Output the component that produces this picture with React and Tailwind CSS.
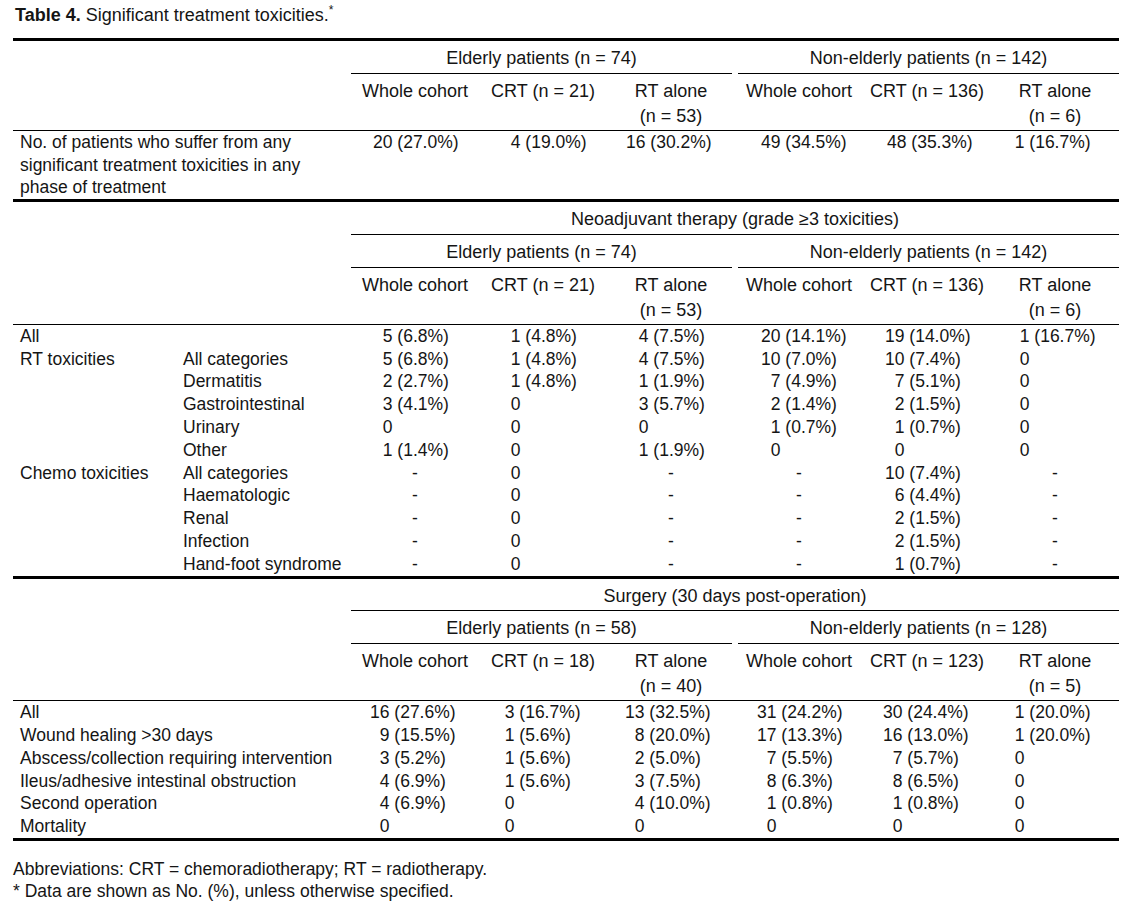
import React from 'react';

const COLS = 'grid grid-cols-[170px_168px_repeat(6,128px)]';

const sections = [
  {
    title: null,
    groups: ['Elderly patients (n = 74)', 'Non-elderly patients (n = 142)'],
    heads: [['Whole cohort'], ['CRT (n = 21)'], ['RT alone', '(n = 53)'], ['Whole cohort'], ['CRT (n = 136)'], ['RT alone', '(n = 6)']],
    pads: ['pl-[22px]', 'pl-[22px]', 'pl-[19px]', 'pl-[26px]', 'pl-[24px]', 'pl-[14px]'],
    rows: [
      {
        label: 'No. of patients who suffer from any significant treatment toxicities in any phase of treatment',
        wide: true,
        vals: ['20 (27.0%)', '4 (19.0%)', '16 (30.2%)', '49 (34.5%)', '48 (35.3%)', '1 (16.7%)'],
      },
    ],
  },
  {
    title: 'Neoadjuvant therapy (grade ≥3 toxicities)',
    groups: ['Elderly patients (n = 74)', 'Non-elderly patients (n = 142)'],
    heads: [['Whole cohort'], ['CRT (n = 21)'], ['RT alone', '(n = 53)'], ['Whole cohort'], ['CRT (n = 136)'], ['RT alone', '(n = 6)']],
    pads: ['pl-[22px]', 'pl-[22px]', 'pl-[22px]', 'pl-[26px]', 'pl-[22px]', 'pl-[19px]'],
    rows: [
      { label: 'All', sub: '', vals: ['5 (6.8%)', '1 (4.8%)', '4 (7.5%)', '20 (14.1%)', '19 (14.0%)', '1 (16.7%)'] },
      { label: 'RT toxicities', sub: 'All categories', vals: ['5 (6.8%)', '1 (4.8%)', '4 (7.5%)', '10 (7.0%)', '10 (7.4%)', '0'] },
      { label: '', sub: 'Dermatitis', vals: ['2 (2.7%)', '1 (4.8%)', '1 (1.9%)', '7 (4.9%)', '7 (5.1%)', '0'] },
      { label: '', sub: 'Gastrointestinal', vals: ['3 (4.1%)', '0', '3 (5.7%)', '2 (1.4%)', '2 (1.5%)', '0'] },
      { label: '', sub: 'Urinary', vals: ['0', '0', '0', '1 (0.7%)', '1 (0.7%)', '0'] },
      { label: '', sub: 'Other', vals: ['1 (1.4%)', '0', '1 (1.9%)', '0', '0', '0'] },
      { label: 'Chemo toxicities', sub: 'All categories', vals: ['-', '0', '-', '-', '10 (7.4%)', '-'] },
      { label: '', sub: 'Haematologic', vals: ['-', '0', '-', '-', '6 (4.4%)', '-'] },
      { label: '', sub: 'Renal', vals: ['-', '0', '-', '-', '2 (1.5%)', '-'] },
      { label: '', sub: 'Infection', vals: ['-', '0', '-', '-', '2 (1.5%)', '-'] },
      { label: '', sub: 'Hand-foot syndrome', vals: ['-', '0', '-', '-', '1 (0.7%)', '-'] },
    ],
  },
  {
    title: 'Surgery (30 days post-operation)',
    groups: ['Elderly patients (n = 58)', 'Non-elderly patients (n = 128)'],
    heads: [['Whole cohort'], ['CRT (n = 18)'], ['RT alone', '(n = 40)'], ['Whole cohort'], ['CRT (n = 123)'], ['RT alone', '(n = 5)']],
    pads: ['pl-[19px]', 'pl-[16px]', 'pl-[18px]', 'pl-[22px]', 'pl-[20px]', 'pl-[14px]'],
    rows: [
      { label: 'All', wide: true, vals: ['16 (27.6%)', '3 (16.7%)', '13 (32.5%)', '31 (24.2%)', '30 (24.4%)', '1 (20.0%)'] },
      { label: 'Wound healing >30 days', wide: true, vals: ['9 (15.5%)', '1 (5.6%)', '8 (20.0%)', '17 (13.3%)', '16 (13.0%)', '1 (20.0%)'] },
      { label: 'Abscess/collection requiring intervention', wide: true, vals: ['3 (5.2%)', '1 (5.6%)', '2 (5.0%)', '7 (5.5%)', '7 (5.7%)', '0'] },
      { label: 'Ileus/adhesive intestinal obstruction', wide: true, vals: ['4 (6.9%)', '1 (5.6%)', '3 (7.5%)', '8 (6.3%)', '8 (6.5%)', '0'] },
      { label: 'Second operation', wide: true, vals: ['4 (6.9%)', '0', '4 (10.0%)', '1 (0.8%)', '1 (0.8%)', '0'] },
      { label: 'Mortality', wide: true, vals: ['0', '0', '0', '0', '0', '0'] },
    ],
  },
];

// numbers line up on the bracket: integer part right-aligned in a 2-digit slot
const Value = ({ v, pad }) => {
  if (v === '-') return <div className="text-center">-</div>;
  const i = v.indexOf(' ');
  const num = i === -1 ? v : v.slice(0, i);
  const rest = i === -1 ? '' : v.slice(i);
  return (
    <div className={`${pad} whitespace-pre`}>
      <span className="inline-block w-[2ch] text-right">{num}</span>
      {rest}
    </div>
  );
};

const Section = ({ s, last }) => (
  <div className={`border-t-[3px] border-black ${last ? 'border-b-[3px]' : ''}`}>
    {s.title && (
      <div className={COLS}>
        <div className="col-start-3 col-span-6 border-b border-black text-center text-[18px] pt-[6px] pb-[3px]">
          {s.title}
        </div>
      </div>
    )}

    <div className={COLS}>
      <div className="col-start-3 col-span-3 mr-[3px] border-b border-black text-center text-[18px] pt-[6px] pb-[3px]">
        {s.groups[0]}
      </div>
      <div className="col-span-3 ml-[3px] border-b border-black text-center text-[18px] pt-[6px] pb-[3px]">
        {s.groups[1]}
      </div>
    </div>

    <div className={`${COLS} border-b border-black`}>
      {s.heads.map((h, idx) => (
        <div
          key={idx}
          className={`${idx === 0 ? 'col-start-3' : ''} text-center text-[18px] leading-[25px] pt-[5px] pb-[1px]`}
        >
          {h.map((line) => (
            <div key={line}>{line}</div>
          ))}
        </div>
      ))}
      {s.heads.every((h) => h.length === 1) && <div className="h-[25px]" />}
    </div>

    <div>
      {s.rows.map((r, idx) => (
        <div key={idx} className={COLS}>
          {r.wide ? (
            <div className="col-span-2 pl-[7px]">
              <div className={r.label.length > 50 ? 'w-[300px]' : ''}>{r.label}</div>
            </div>
          ) : (
            <>
              <div className="pl-[7px]">{r.label}</div>
              <div>{r.sub}</div>
            </>
          )}
          {r.vals.map((v, j) => (
            <Value key={j} v={v} pad={s.pads[j]} />
          ))}
        </div>
      ))}
    </div>
  </div>
);

export default function App() {
  return (
    <div className="w-[1129px] h-[904px] bg-white text-[#151515] font-['Liberation_Sans',Arial,sans-serif] text-[17.5px] leading-[22.8px]">
      <div className="pl-[15px] pt-[4px] text-[18px] leading-[22px]">
        <span className="font-bold">Table 4.</span> Significant treatment toxicities.
        <span className="align-super text-[12px] leading-none">*</span>
      </div>

      <div className="ml-[13px] w-[1106px] mt-[12px]">
        {sections.map((s, idx) => (
          <Section key={idx} s={s} last={idx === sections.length - 1} />
        ))}
      </div>

      <div className="pl-[13px] pt-[17px] leading-[22px]">
        <div>Abbreviations: CRT = chemoradiotherapy; RT = radiotherapy.</div>
        <div>* Data are shown as No. (%), unless otherwise specified.</div>
      </div>
    </div>
  );
}
